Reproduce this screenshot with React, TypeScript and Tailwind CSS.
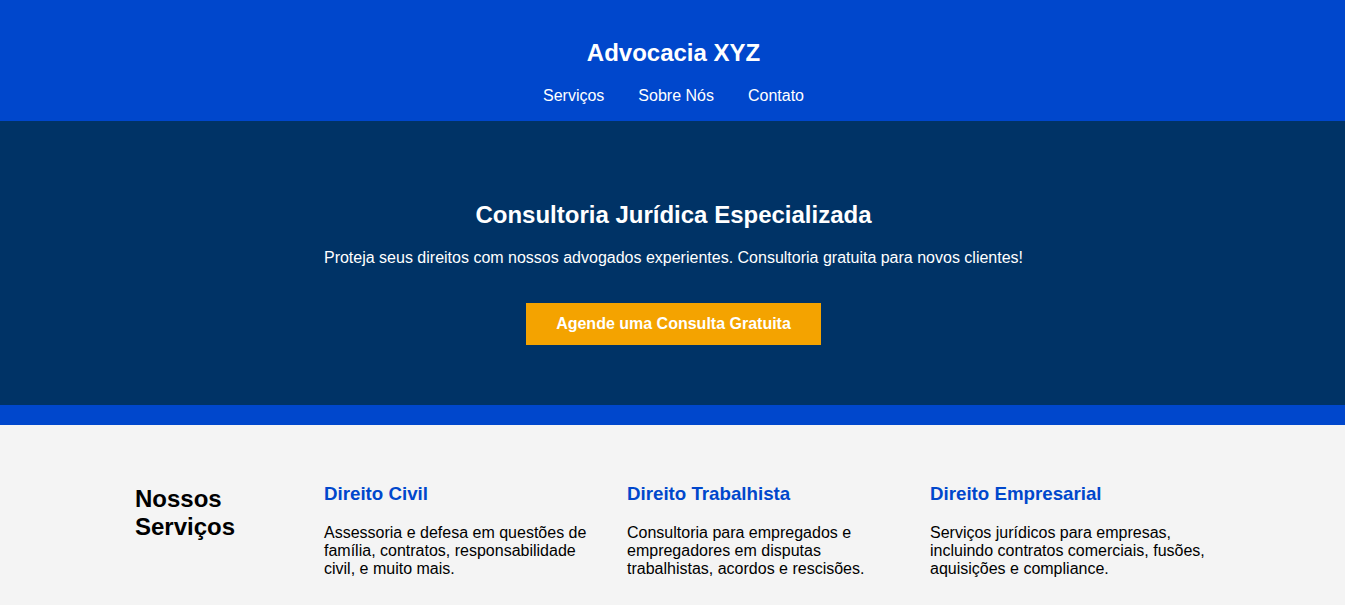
const services = [
  {
    title: "Direito Civil",
    text: "Assessoria e defesa em questões de família, contratos, responsabilidade civil, e muito mais.",
  },
  {
    title: "Direito Trabalhista",
    text: "Consultoria para empregados e empregadores em disputas trabalhistas, acordos e rescisões.",
  },
  {
    title: "Direito Empresarial",
    text: "Serviços jurídicos para empresas, incluindo contratos comerciais, fusões, aquisições e compliance.",
  },
];

export default function App() {
  return (
    <div className="min-h-[605px] bg-[#f4f4f4] text-black font-['Liberation_Sans',Arial,sans-serif]">
      <header className="bg-[#0047cc] pt-[39px] pb-4 pl-[2px] text-center text-white">
        <h1 className="text-[24px] leading-7 font-bold">Advocacia XYZ</h1>
        <nav className="mt-5 flex justify-center gap-[34px] text-[16px] leading-[18px]">
          <a href="#servicos">Serviços</a>
          <a href="#sobre">Sobre Nós</a>
          <a href="#contato">Contato</a>
        </nav>
      </header>

      <section className="bg-[#003366] pt-20 pb-[60px] pl-[2px] text-center text-white">
        <h2 className="text-[24px] leading-7 font-bold">Consultoria Jurídica Especializada</h2>
        <p className="mt-5 text-[16px] leading-[18px]">
          Proteja seus direitos com nossos advogados experientes. Consultoria gratuita para novos clientes!
        </p>
        <button className="mt-9 bg-[#f4a300] px-[30px] py-3 text-[16px] leading-[18px] font-bold text-white">
          Agende uma Consulta Gratuita
        </button>
      </section>

      <div className="h-5 bg-[#0047cc]" />

      <section id="servicos" className="pt-[58px] pb-8">
        <div className="ml-[135px] flex items-start gap-[27px]">
          <h2 className="mt-[2px] w-[162px] text-[24px] leading-7 font-bold">Nossos Serviços</h2>
          {services.map((s) => (
            <div key={s.title} className="w-[276px]">
              <h3 className="text-[18.72px] leading-[21px] font-bold text-[#0047cc]">{s.title}</h3>
              <p className="mt-5 text-[16px] leading-[18px]">{s.text}</p>
            </div>
          ))}
        </div>
      </section>
    </div>
  );
}
